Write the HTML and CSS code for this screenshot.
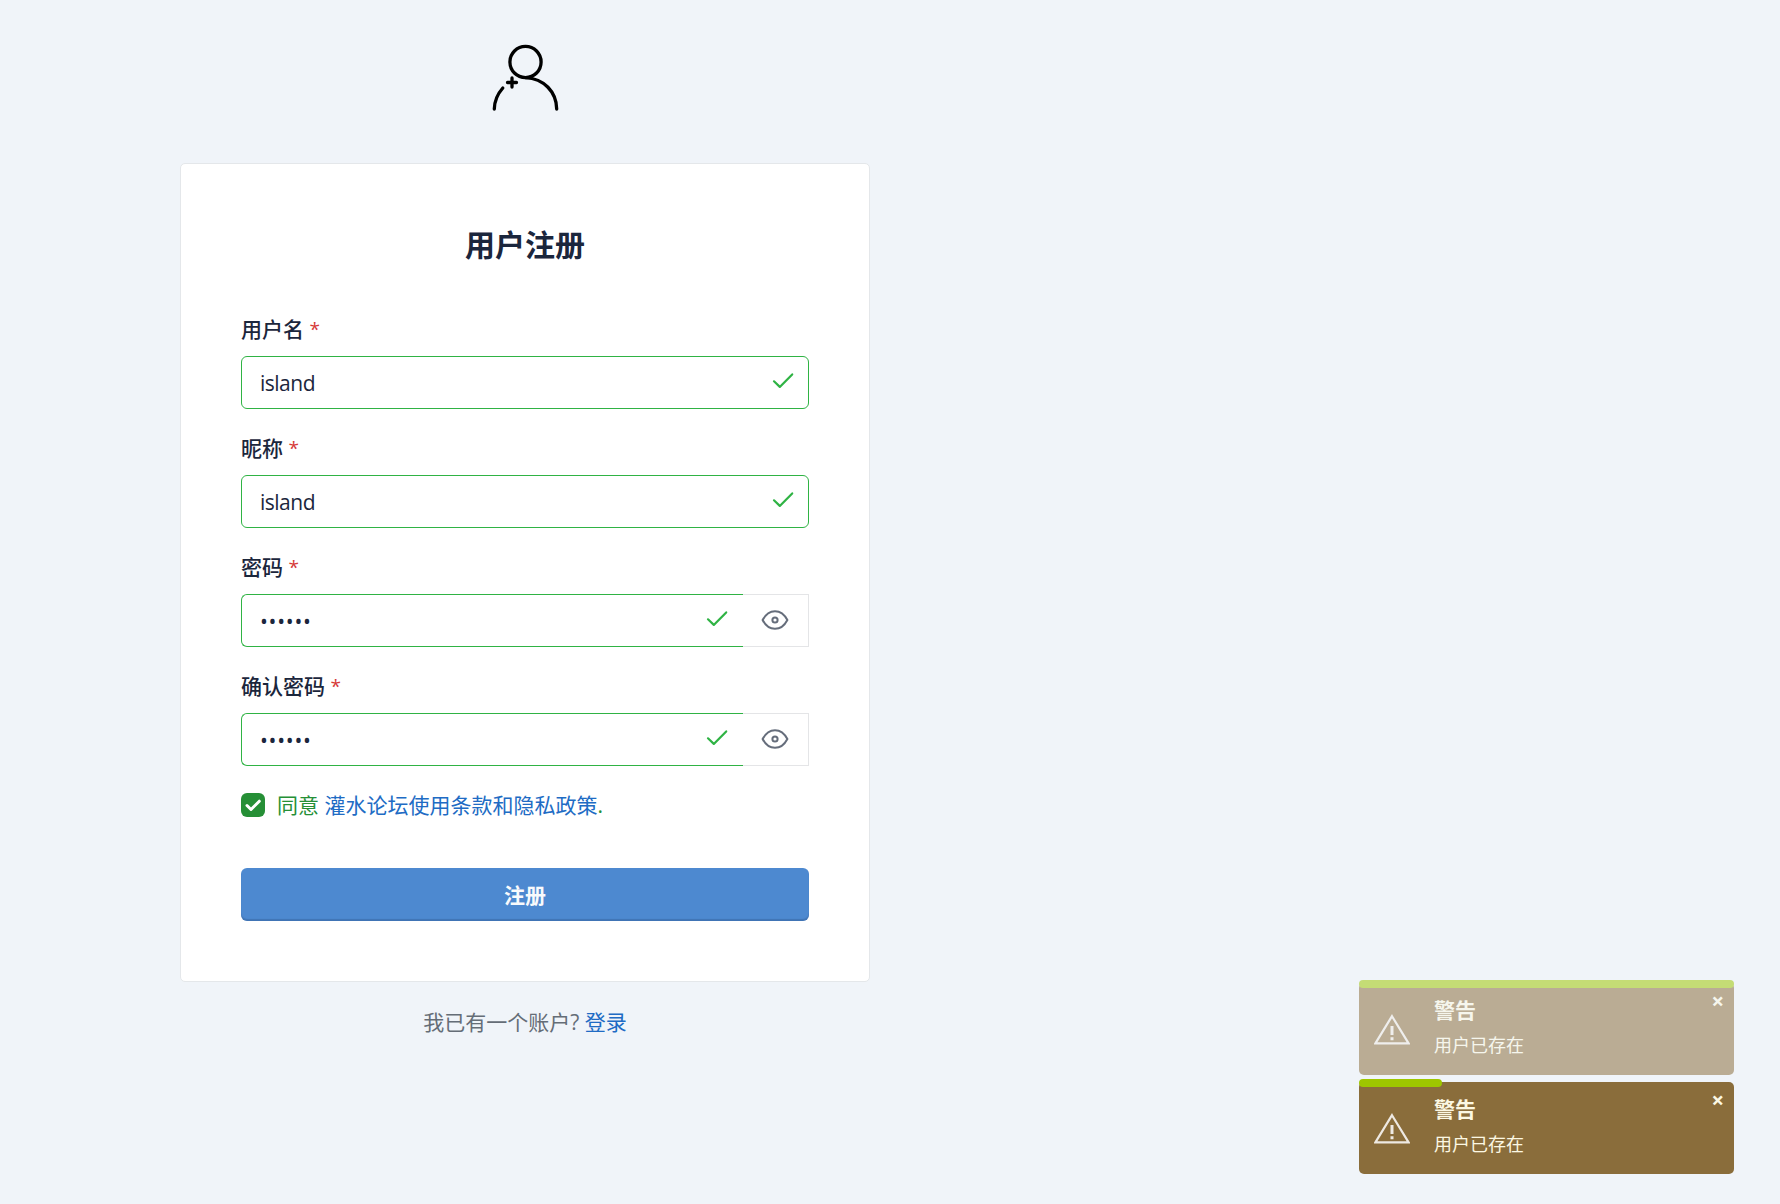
FILE: index.html
```html
<!DOCTYPE html>
<html lang="zh-CN">
<head>
    <meta charset="UTF-8">
    <meta name="viewport" content="width=device-width, initial-scale=1.0">
    <title>用户注册</title>
    <link rel="stylesheet" href="styles.css">
</head>
<body>
    <svg class="icon-defs" width="0" height="0">
        <symbol id="icon-check" viewBox="0 0 24 24">
            <path d="M3 12.3l5.8 5.6L21.2 5.4"/>
        </symbol>
        <symbol id="icon-eye" viewBox="0 0 28 22">
            <path d="M1.6 11C7.8-.8 20.2-.8 26.4 11 20.2 22.8 7.8 22.8 1.6 11z"/>
            <circle cx="14" cy="11" r="2.6"/>
        </symbol>
        <symbol id="icon-warning" viewBox="0 0 36 31">
            <path d="M18 2.2L34.6 29.4H1.4z"/>
            <path class="mark" d="M18 12v9M18 23.2v3"/>
        </symbol>
    </svg>

    <div class="page">
        <svg class="logo" viewBox="0 0 70 70">
            <circle cx="35.5" cy="18" r="15.6"/>
            <path d="M35.5 33.6C54 34.5 66.5 48 66.7 65"/>
            <path d="M4.3 65C4.5 56.5 7.5 50 12.8 44"/>
            <path d="M22 34v9M17.5 38.5h9"/>
        </svg>

        <form class="card">
            <h2>用户注册</h2>

            <div class="field">
                <label for="username">用户名 <span class="required">*</span></label>
                <div class="control">
                    <input type="text" id="username" value="island">
                    <svg class="check"><use href="#icon-check"/></svg>
                </div>
            </div>

            <div class="field">
                <label for="nickname">昵称 <span class="required">*</span></label>
                <div class="control">
                    <input type="text" id="nickname" value="island">
                    <svg class="check"><use href="#icon-check"/></svg>
                </div>
            </div>

            <div class="field">
                <label for="password">密码 <span class="required">*</span></label>
                <div class="input-group">
                    <div class="control">
                        <input type="password" id="password" value="island">
                        <svg class="check"><use href="#icon-check"/></svg>
                    </div>
                    <button type="button" class="toggle"><svg><use href="#icon-eye"/></svg></button>
                </div>
            </div>

            <div class="field">
                <label for="confirm">确认密码 <span class="required">*</span></label>
                <div class="input-group">
                    <div class="control">
                        <input type="password" id="confirm" value="island">
                        <svg class="check"><use href="#icon-check"/></svg>
                    </div>
                    <button type="button" class="toggle"><svg><use href="#icon-eye"/></svg></button>
                </div>
            </div>

            <div class="agree">
                <span class="checkbox"><svg viewBox="0 0 24 24"><path d="M6 12.5l4 4 8.3-8.3"/></svg></span>
                <span>同意 <a href="#">灌水论坛使用条款和隐私政策</a>.</span>
            </div>

            <button type="button" class="submit">注册</button>
        </form>

        <p class="footer">我已有一个账户? <a href="#">登录</a></p>
    </div>

    <div class="toasts">
        <div class="toast fading">
            <div class="progress"></div>
            <svg class="warning"><use href="#icon-warning"/></svg>
            <div>
                <div class="toast-title">警告</div>
                <div class="toast-text">用户已存在</div>
            </div>
            <span class="close">×</span>
        </div>
        <div class="toast">
            <div class="progress" style="width: 22%"></div>
            <svg class="warning"><use href="#icon-warning"/></svg>
            <div>
                <div class="toast-title">警告</div>
                <div class="toast-text">用户已存在</div>
            </div>
            <span class="close">×</span>
        </div>
    </div>
</body>
</html>
```

FILE: styles.css
```css
* {
    box-sizing: border-box;
}
body {
    margin: 0;
    background: #f0f4f9;
    color: #1b263c;
    font-family: "Open Sans", "Noto Sans CJK SC", sans-serif;
    font-size: 21px;
    line-height: 30px;
}
a {
    color: #206bc4;
    text-decoration: none;
}
svg {
    fill: none;
    stroke: currentColor;
    stroke-linecap: round;
    stroke-linejoin: round;
}
.icon-defs {
    position: absolute;
}
.page {
    width: 1050px;
    padding-top: 44px;
    display: flex;
    flex-direction: column;
    align-items: center;
}
.logo {
    width: 70px;
    height: 70px;
    margin-bottom: 49px;
    color: #000;
    stroke-width: 3.3;
}
.card {
    width: 690px;
    height: 819px;
    padding: 60px;
    background: #fff;
    border: 1px solid #e4e7ea;
    border-radius: 5px;
}
h2 {
    margin: 0 0 48px;
    font-size: 30px;
    line-height: 42px;
    text-align: center;
}
.field {
    margin-bottom: 24px;
}
.field label {
    display: block;
    height: 30px;
    margin-bottom: 12px;
    font-weight: 500;
}
.required {
    color: #d63939;
    font-size: 19px;
    font-weight: 400;
    line-height: 1;
    vertical-align: 1px;
}
.control {
    position: relative;
    flex: 1;
}
.control input {
    display: block;
    width: 100%;
    height: 53px;
    padding: 1px 18px 0;
    border: 1px solid #2fb344;
    border-radius: 6px;
    outline: none;
    background: #fff;
    color: #1b263c;
    font: inherit;
    letter-spacing: -0.5px;
}
.control input[type="password"] {
    letter-spacing: 0.7px;
}
.check {
    position: absolute;
    top: 13px;
    right: 14px;
    width: 24px;
    height: 24px;
    color: #2fb344;
    stroke-width: 2.2;
}
.input-group {
    display: flex;
}
.input-group input {
    border-right: 0;
    border-radius: 6px 0 0 6px;
}
.toggle {
    display: flex;
    align-items: center;
    justify-content: center;
    width: 66px;
    height: 53px;
    padding: 0 1px 1px 0;
    border: 1px solid #e4e5e7;
    border-left: 0;
    background: #fff;
    color: #656d7b;
}
.toggle svg {
    width: 28px;
    height: 22px;
    stroke-width: 2;
}
.agree {
    display: flex;
    align-items: center;
    gap: 12px;
    margin-bottom: 48px;
    color: #268f36;
}
.checkbox {
    width: 24px;
    height: 24px;
    border-radius: 6px;
    background: #268f36;
    color: #fff;
}
.checkbox svg {
    display: block;
    stroke-width: 3;
}
.submit {
    display: block;
    width: 100%;
    height: 53px;
    padding: 0;
    border: 0;
    border-radius: 6px;
    background: #4d89d0;
    box-shadow: inset 0 -2px 1px rgba(35, 70, 120, 0.3);
    color: #f8fafc;
    font: inherit;
    font-weight: 600;
}
.footer {
    margin: 25px 0 0;
    color: #656d77;
}

/* toasts */
.toasts {
    position: fixed;
    right: 46px;
    bottom: 30px;
    width: 375px;
    display: flex;
    flex-direction: column;
    gap: 7px;
}
.toast {
    position: relative;
    display: flex;
    height: 92px;
    padding: 12px 15px;
    border-radius: 5px;
    background: #8a6d3b;
    color: #fcf8e3;
}
.fading {
    opacity: 0.53;
}
.progress {
    position: absolute;
    top: -3px;
    left: 0;
    width: 100%;
    height: 8px;
    border-radius: 4px;
    background: #9ec600;
}
.warning {
    width: 36px;
    height: 31px;
    margin: 19px 24px 0 0;
    color: #eee9e2;
    stroke-width: 2.2;
    stroke-linejoin: miter;
}
.mark {
    stroke-width: 3;
    stroke-linecap: butt;
}
.toast-title {
    font-weight: 700;
}
.toast-text {
    margin-top: 6px;
    font-size: 18px;
    line-height: 28px;
}
.close {
    position: absolute;
    top: 2px;
    right: 10px;
    font-size: 22px;
    font-weight: 700;
}
```
